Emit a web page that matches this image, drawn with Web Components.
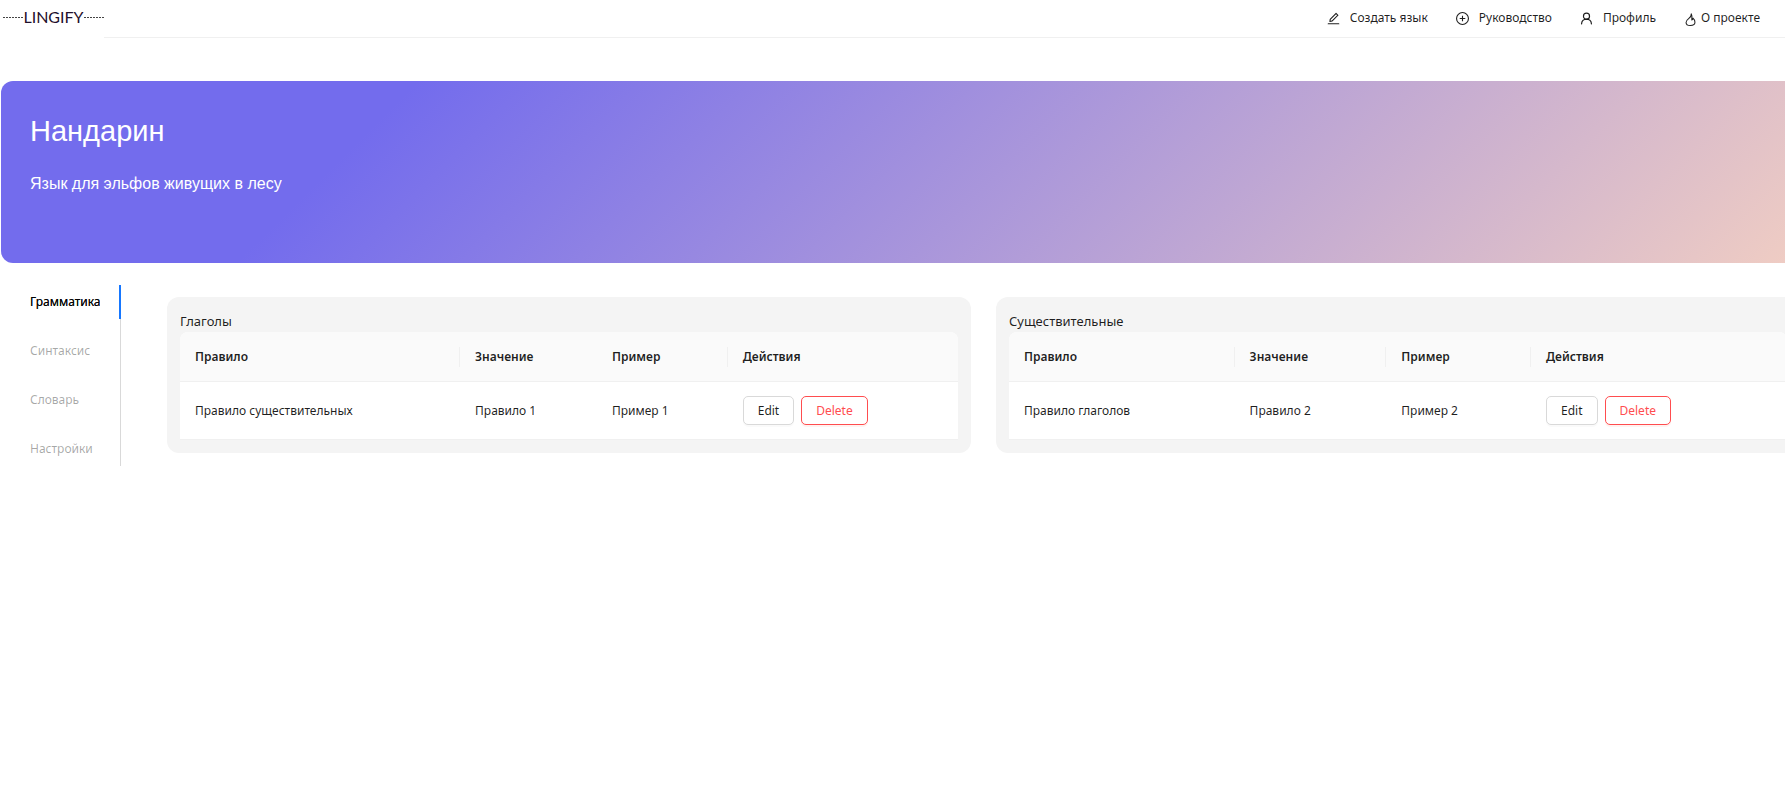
<!DOCTYPE html>
<html lang="ru">
<head>
<meta charset="utf-8">
<title>Lingify</title>
<style>
html, body { margin: 0; background: #fff; }
body { font: 12px/20px "Noto Sans", "Open Sans", sans-serif; color: rgba(0,0,0,.88); overflow-x: hidden; }
</style>
</head>
<body>
<lingify-app></lingify-app>
<script>
const define = (name, html, setup) => customElements.define(name, class extends HTMLElement {
  connectedCallback() {
    if (this.shadowRoot) return;
    this.attachShadow({ mode: 'open' }).innerHTML = html;
    if (setup) setup(this, this.shadowRoot);
  }
});

const ICONS = {
  edit: '<svg viewBox="64 64 896 896" fill="currentColor"><path d="M257.7 752c2 0 4-.2 6-.5L431.9 722c2-.4 3.9-1.3 5.3-2.8l423.9-423.9a9.96 9.96 0 000-14.1L694.9 114.9c-1.9-1.9-4.4-2.9-7.1-2.9s-5.2 1-7.1 2.9L256.8 538.8c-1.5 1.5-2.4 3.3-2.8 5.3l-29.5 168.2a33.5 33.5 0 009.4 29.8c6.6 6.4 14.9 9.9 23.8 9.9zm67.4-174.4L687.8 215l73.3 73.3-362.7 362.6-88.9 15.7 15.6-89zM880 836H144c-17.7 0-32 14.3-32 32v36c0 4.4 3.6 8 8 8h784c4.4 0 8-3.6 8-8v-36c0-17.7-14.3-32-32-32z"/></svg>',
  plus: '<svg viewBox="64 64 896 896" fill="none" stroke="currentColor" stroke-width="76"><circle cx="512" cy="512" r="410"/><path d="M512 320v384M320 512h384"/></svg>',
  user: '<svg viewBox="64 64 896 896" fill="none" stroke="currentColor" stroke-width="80" stroke-linecap="round"><circle cx="512" cy="350" r="210"/><path d="M172 880C184 700 320 566 512 566S840 700 852 880"/></svg>',
  fire: '<svg viewBox="0 0 14 14" fill="none" stroke="currentColor" stroke-width="1.1" stroke-linejoin="round" overflow="visible"><path d="M7.8 2C8 4.200 6.800 5.800 5 7.200C3.200 8.600 2.200 9.500 2.200 11.200C2.200 13.300 4 14.500 6.800 14.500S11.800 13.200 11.800 11C11.800 9.200 10.800 7.600 9.700 6.600C9.500 7.800 9 8.400 8.400 8.700C8.800 6.200 9 4 7.800 2Z"/></svg>'
};

define('lg-icon', `<style>:host{display:block;width:13px;height:13px}svg{display:block;width:100%;height:100%}</style>`,
  (el, root) => root.innerHTML += ICONS[el.getAttribute('name')]);

define('lg-nav-link', `<style>
:host{display:block}
a{display:flex;align-items:center;gap:10px;color:inherit;text-decoration:none;white-space:nowrap}
:host([compact]) a{gap:4px}
</style><a href="#"><slot name="icon"></slot><slot></slot></a>`);

define('lg-logo', `<style>
:host{display:block;width:104px}
a{display:flex;align-items:center;height:34px;padding-left:3px;color:#1f0f2b;text-decoration:none;font:16px/20px Lato,sans-serif}
i{flex:1;height:1px;background:repeating-linear-gradient(90deg,#444 0 2px,#fff 2px 3px)}
</style><a href="#"><i></i><span>LINGIFY</span><i></i></a>`);

define('lg-header', `<style>
:host{display:flex;height:38px}
nav{flex:1;display:flex;justify-content:flex-end;gap:28px;padding-right:25px;height:37px;line-height:36px;border-bottom:1px solid #f0f0f0}
</style><lg-logo></lg-logo><nav>
<lg-nav-link><lg-icon slot="icon" name="edit"></lg-icon>Создать язык</lg-nav-link>
<lg-nav-link><lg-icon slot="icon" name="plus"></lg-icon>Руководство</lg-nav-link>
<lg-nav-link><lg-icon slot="icon" name="user"></lg-icon>Профиль</lg-nav-link>
<lg-nav-link compact><lg-icon slot="icon" name="fire"></lg-icon>О проекте</lg-nav-link></nav>`);

define('lg-banner', `<style>
:host{display:block;box-sizing:border-box;height:182px;padding:32px 29px;border-radius:12px;color:#fff;
font-family:"Liberation Sans",Arial,sans-serif;
background:linear-gradient(135deg,#736ced 21%,#f0cdc3 100%)}
h1{margin:0 0 25px;font-size:29px;line-height:36px;font-weight:400}
p{margin:0;font-size:16px;line-height:20px}
</style><h1><slot name="title"></slot></h1><p><slot></slot></p>`);

define('lg-tabs', `<style>
:host{display:block}
nav{display:flex;flex-direction:column;gap:15px;border-right:1px solid #d9d9d9}
a{line-height:34px;padding-left:29px;color:rgba(0,0,0,.35);text-decoration:none;margin-right:-1px;border-right:2px solid transparent}
a[aria-current]{color:rgba(0,0,0,.88);border-color:#1677ff;text-shadow:0 0 .25px currentColor}
</style><nav><a href="#" aria-current="page">Грамматика</a><a href="#">Синтаксис</a><a href="#">Словарь</a><a href="#">Настройки</a></nav>`);

define('lg-button', `<style>
:host{display:inline-block}
button{display:block;box-sizing:border-box;height:29px;padding:0 14px;border:1px solid #d9d9d9;border-radius:5px;background:#fff;color:rgba(0,0,0,.88);font:inherit;line-height:20px;box-shadow:0 2px 0 rgba(0,0,0,.02)}
:host([danger]) button{color:#ff4d4f;border-color:#ff4d4f;box-shadow:0 2px 0 rgba(255,38,5,.06)}
</style><button type="button"><slot></slot></button>`);

define('lg-rules', `<style>
:host{display:block;box-sizing:border-box;padding:13px;border-radius:12px;background:#f4f4f4}
h2{margin:0;font-size:13px;line-height:22px;font-weight:400}
table{width:100%;table-layout:fixed;border-collapse:separate;border-spacing:0;background:#fff;border-radius:8px 8px 0 0}
th,td{box-sizing:border-box;padding:0 15px;text-align:left;border-bottom:1px solid #f0f0f0;white-space:nowrap}
th{height:50px;font-weight:600;background:linear-gradient(#f0f0f0,#f0f0f0) right center/1px 20px no-repeat #fafafa}
th:first-child{border-top-left-radius:8px}
th:last-child{border-top-right-radius:8px;background:#fafafa}
:host([joined]) th:nth-child(2){background:#fafafa}
td{height:58px}
.actions{display:flex;gap:7px}
</style><h2></h2><table><colgroup><col><col><col><col></colgroup>
<thead><tr><th scope="col">Правило</th><th scope="col">Значение</th><th scope="col">Пример</th><th scope="col">Действия</th></tr></thead>
<tbody><tr><td></td><td></td><td></td><td><div class="actions"><lg-button>Edit</lg-button><lg-button danger>Delete</lg-button></div></td></tr></tbody></table>`,
  (el, root) => {
    root.querySelector('h2').textContent = el.getAttribute('heading');
    const cells = root.querySelectorAll('td');
    ['rule', 'value', 'example'].forEach((k, i) => cells[i].textContent = el.getAttribute(k));
    el.getAttribute('columns').split(' ').forEach((w, i) => root.querySelectorAll('col')[i].style.width = w);
  });

define('lingify-app', `<style>
:host{display:block}
main{margin:43px -15px 0 1px}
.content{display:grid;grid-template-columns:120px minmax(0,1fr);column-gap:46px;margin-top:22px;align-items:start}
.cards{display:grid;grid-template-columns:repeat(2,minmax(0,1fr));gap:25px;padding-top:12px}
</style><lg-header></lg-header>
<main><lg-banner><span slot="title">Нандарин</span>Язык для эльфов живущих в лесу</lg-banner>
<div class="content"><lg-tabs></lg-tabs><div class="cards">
<lg-rules joined heading="Глаголы" columns="36% 17.6% 16.8%" rule="Правило существительных" value="Правило 1" example="Пример 1"></lg-rules>
<lg-rules heading="Существительные" columns="29% 19.5% 18.6%" rule="Правило глаголов" value="Правило 2" example="Пример 2"></lg-rules>
</div></div></main>`);
</script>
</body>
</html>
